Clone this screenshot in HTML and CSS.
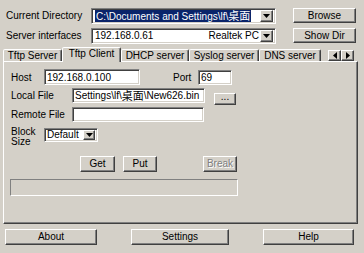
FILE: index.html
```html
<!DOCTYPE html>
<html>
<head>
<meta charset="utf-8">
<link rel="stylesheet" href="styles.css">
</head>
<body>
<div class="app">
  <div class="row">
    <span class="top-lbl">Current Directory</span>
    <div class="combo sunken">
      <div class="combo-text"><span class="sel">C:\Documents and Settings\lf\<span class="cjk">桌面</span></span></div>
      <div class="drop raised"><svg width="7" height="4" viewBox="0 0 7 4"><path d="M0 0H7L3.5 4Z" fill="#000"/></svg></div>
    </div>
    <button class="btn raised side">Browse</button>
  </div>
  <div class="row r2">
    <span class="top-lbl">Server interfaces</span>
    <div class="combo sunken">
      <div class="combo-text split"><span>192.168.0.61</span><span>Realtek PC</span></div>
      <div class="drop raised"><svg width="7" height="4" viewBox="0 0 7 4"><path d="M0 0H7L3.5 4Z" fill="#000"/></svg></div>
    </div>
    <button class="btn raised side">Show Dir</button>
  </div>

  <div class="tabs">
    <div class="tab w-ts">Tftp Server</div>
    <div class="tab active w-tc">Tftp Client</div>
    <div class="tab w-dh">DHCP server</div>
    <div class="tab w-sy">Syslog server</div>
    <div class="tab w-dn">DNS server</div>
    <div class="scroll">
      <div class="arrow raised"><svg width="4" height="7" viewBox="0 0 4 7"><path d="M4 0V7L0 3.5Z" fill="#000"/></svg></div>
      <div class="arrow raised"><svg width="4" height="7" viewBox="0 0 4 7"><path d="M0 0V7L4 3.5Z" fill="#000"/></svg></div>
    </div>
  </div>

  <div class="panel">
    <div class="prow p-host">
      <span class="lbl-s">Host</span>
      <div class="field sunken w-host">192.168.0.100</div>
      <span class="lbl-port">Port</span>
      <div class="field sunken w-port">69</div>
    </div>
    <div class="prow p-local">
      <span class="lbl-l">Local File</span>
      <div class="field sunken w-local">Settings\lf\<span class="cjk">桌面</span>\New626.bin</div>
      <button class="btn raised dots">...</button>
    </div>
    <div class="prow p-remote">
      <span class="lbl-l">Remote File</span>
      <div class="field sunken w-remote"></div>
    </div>
    <div class="prow p-block">
      <span class="lbl-s two">Block<br>Size</span>
      <div class="select sunken">
        <div class="select-text">Default</div>
        <div class="drop raised"><svg width="7" height="4" viewBox="0 0 7 4"><path d="M0 0H7L3.5 4Z" fill="#000"/></svg></div>
      </div>
    </div>
    <div class="prow p-btns">
      <button class="btn raised b-get">Get</button>
      <button class="btn raised b-put">Put</button>
      <button class="btn raised b-break" disabled>Break</button>
    </div>
    <div class="progress-row">
      <div class="progress"></div>
    </div>
  </div>

  <div class="bottom">
    <button class="btn raised b-about">About</button>
    <button class="btn raised b-settings">Settings</button>
    <button class="btn raised b-help">Help</button>
  </div>
</div>
</body>
</html>
```

FILE: styles.css
```css
* { box-sizing: border-box; }

body {
  margin: 0;
  background: #d4d0c8;
  font-family: "Liberation Sans", Arial, sans-serif;
  font-size: 10px;
  color: #000;
  overflow: hidden;
}

.cjk {
  font-family: "Noto Sans CJK SC", "Noto Sans CJK JP", sans-serif;
  font-size: 11px;
  line-height: 11px;
}

.sunken {
  border: 1px solid;
  border-color: #808080 #fff #fff #808080;
  box-shadow: inset 1px 1px #404040, inset -1px -1px #d4d0c8;
  background: #fff;
}

.raised {
  border: 1px solid;
  border-color: #fff #404040 #404040 #fff;
  box-shadow: inset -1px -1px #808080;
  background: #d4d0c8;
}

.btn {
  font: inherit;
  color: #000;
  padding: 0;
  margin: 0;
  display: flex;
  align-items: center;
  justify-content: center;
  line-height: 10px;
}

.app { padding-top: 8px; }

.row {
  display: flex;
  align-items: center;
  height: 15px;
  padding-left: 6px;
}
.r2 { margin-top: 5px; }

.top-lbl { width: 85px; white-space: nowrap; }

.combo {
  width: 185px;
  height: 16px;
  display: flex;
  align-items: center;
  padding: 2px;
}
.combo-text {
  flex: 1;
  min-width: 0;
  height: 100%;
  display: flex;
  align-items: center;
  padding-left: 1px;
  white-space: nowrap;
  line-height: 11px;
}
.sel {
  background: #0a246a;
  color: #fff;
  padding: 0 1px;
  line-height: 11px;
}
.split { justify-content: space-between; padding-right: 1px; }

.drop {
  width: 13px;
  height: 12px;
  flex: none;
  display: flex;
  align-items: center;
  justify-content: center;
}
.drop svg { display: block; }

.side { width: 63px; height: 15px; margin-left: 17px; }

/* tabs */
.tabs {
  display: flex;
  align-items: flex-end;
  height: 14px;
  margin-top: 4px;
  padding-left: 3px;
  position: relative;
  z-index: 1;
}
.tab {
  height: 12px;
  border: 1px solid;
  border-bottom: none;
  border-color: #fff #404040 transparent #fff;
  box-shadow: inset -1px 0 #808080;
  border-radius: 2px 2px 0 0;
  display: flex;
  align-items: center;
  justify-content: center;
  white-space: nowrap;
  line-height: 10px;
  background: #d4d0c8;
}
.tab.active { height: 15px; margin-bottom: -1px; padding-bottom: 2px; }
.w-ts { width: 59px; }
.w-tc { width: 59px; }
.w-dh { width: 68px; }
.w-sy { width: 70px; }
.w-dn { width: 62px; }

.scroll {
  display: flex;
  margin-left: 7px;
}
.arrow {
  width: 13px;
  height: 11px;
  display: flex;
  align-items: center;
  justify-content: center;
}
.arrow svg { display: block; }

/* panel */
.panel {
  margin-left: 3px;
  width: 355px;
  height: 163px;
  border: 1px solid;
  border-color: #fff #404040 #404040 #fff;
  box-shadow: inset -1px -1px #808080;
  padding-left: 7px;
}
.prow { display: flex; align-items: center; }
.p-host { margin-top: 7px; height: 16px; }
.p-local { margin-top: 3px; height: 15px; }
.p-remote { margin-top: 4px; height: 15px; }
.p-block { margin-top: 5px; height: 20px; align-items: flex-start; }
.p-btns { margin-top: 9px; height: 16px; }

.lbl-s { width: 33px; white-space: nowrap; }
.lbl-l { width: 61px; white-space: nowrap; }
.lbl-port { margin-left: 33px; width: 25px; }
.two { line-height: 10px; }

.field {
  height: 15px;
  padding-left: 2px;
  display: flex;
  align-items: center;
  white-space: nowrap;
  overflow: hidden;
  line-height: 11px;
}
.w-host { width: 96px; height: 16px; }
.w-port { width: 34px; }
.w-local { width: 133px; }
.w-remote { width: 132px; }

.dots {
  width: 22px;
  height: 12px;
  margin-left: 9px;
  align-self: flex-start;
  margin-top: 5px;
  line-height: 6px;
  align-items: flex-start;
}

.select {
  width: 54px;
  height: 14px;
  margin-top: 1px;
  display: flex;
  align-items: center;
  padding: 1px 2px 1px 1px;
}
.select-text { flex: 1; padding-left: 1px; line-height: 10px; }
.select .drop { height: 10px; width: 12px; }

.b-get { width: 35px; height: 16px; margin-left: 69px; }
.b-put { width: 34px; height: 16px; margin-left: 8px; }
.b-break {
  width: 34px;
  height: 16px;
  margin-left: 46px;
  color: #808080;
  text-shadow: 1px 1px #fff;
}

.progress-row {
  display: flex;
  margin-top: 7px;
  margin-left: -1px;
}
.progress {
  flex: none;
  width: 228px;
  height: 17px;
  border: 1px solid;
  border-color: #808080 #fff #fff #808080;
  background: #d4d0c8;
}

.bottom {
  display: flex;
  margin-top: 5px;
  height: 16px;
}
.b-about { width: 92px; height: 16px; margin-left: 5px; }
.b-settings { width: 98px; height: 16px; margin-left: 34px; }
.b-help { width: 91px; height: 16px; margin-left: 34px; }
```
